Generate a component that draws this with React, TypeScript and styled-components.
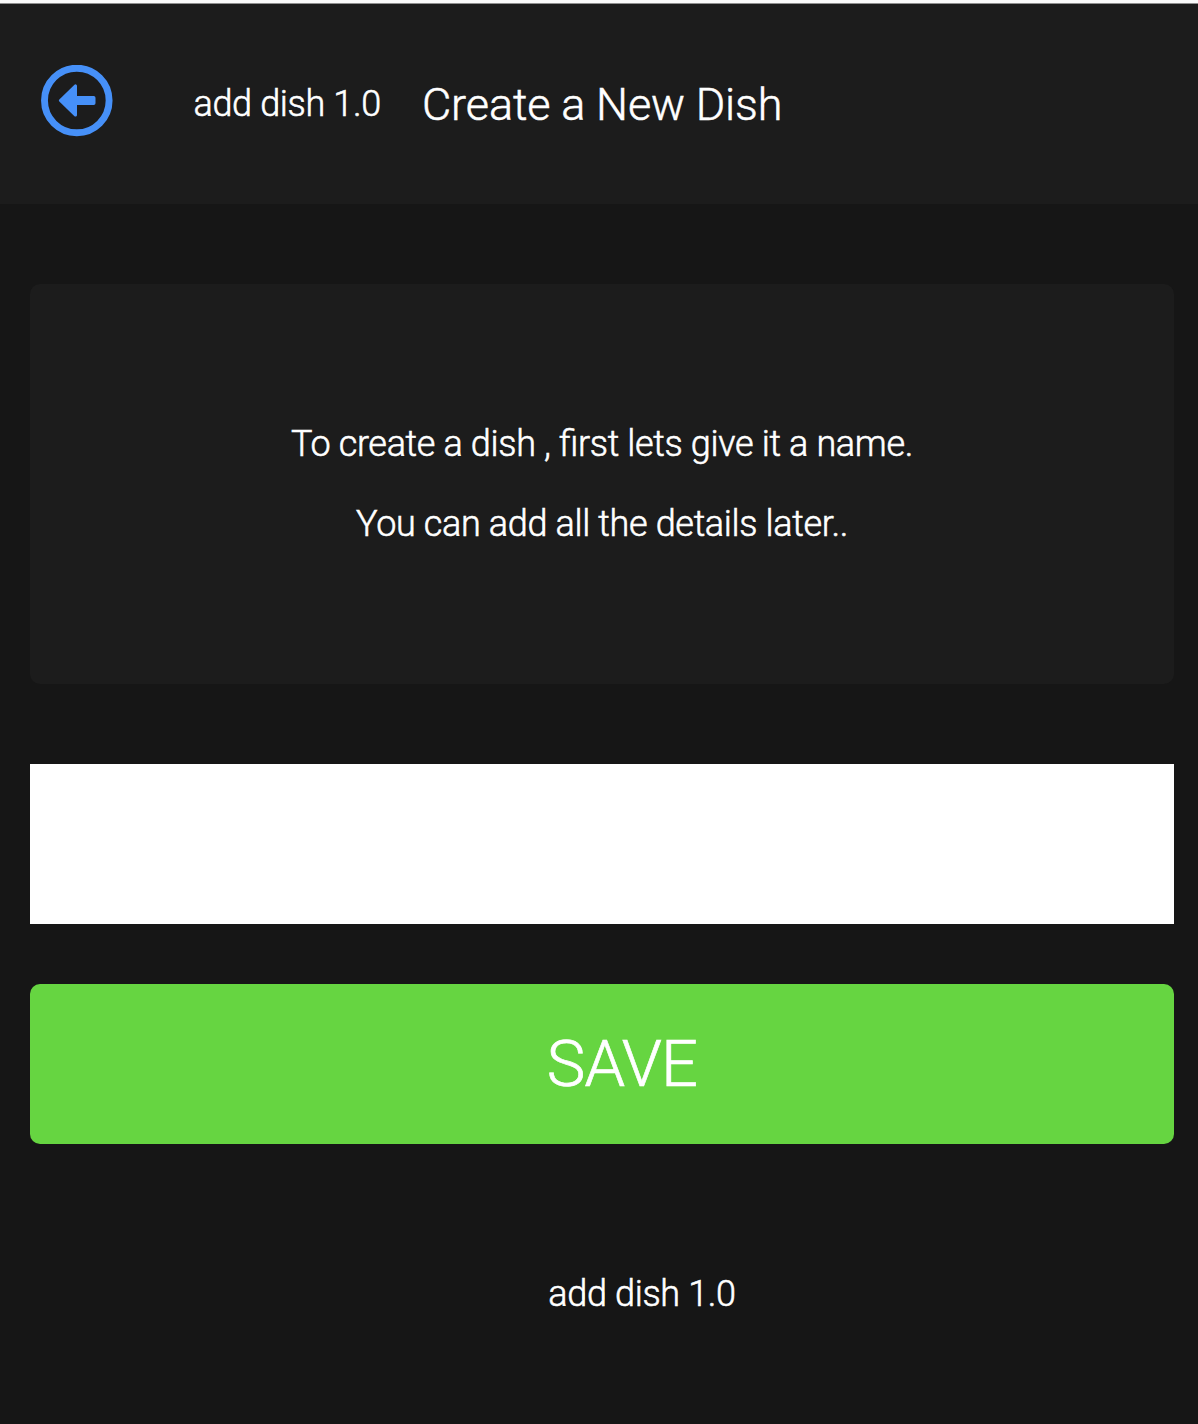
import React from 'react';
import styled, { createGlobalStyle } from 'styled-components';

const GlobalStyle = createGlobalStyle`
  * { box-sizing: border-box; }
  body { margin: 0; background: #161616; }
`;

const Page = styled.div`
  display: flex;
  flex-direction: column;
  height: 1424px;
  background: #161616;
  border-top: 3px solid #fafafa;
  color: #fff;
  font-family: Roboto, sans-serif;
  font-weight: 300;
  overflow: hidden;
`;

const Header = styled.header`
  display: flex;
  align-items: center;
  height: 201px;
  padding-left: 41px;
  border-top: 1px solid #8f8f8f;
  background: #1c1c1c;
`;

const BackButton = styled.button`
  width: 72px;
  height: 72px;
  padding: 0;
  margin: 0 80.5px 7px 0;
  border: 0;
  background: none;
  color: #4690f8;
  svg { display: block; }
`;

const Label = styled.span<{ $width?: number }>`
  font-size: 36px;
  line-height: 80px;
  letter-spacing: -0.35px;
  font-feature-settings: 'liga' 1;
  -webkit-text-stroke: 0.55px currentColor;
  white-space: nowrap;
  width: ${({ $width }) => ($width ? `${$width}px` : 'auto')};
`;

const Title = styled.h1`
  margin: 1px 0 0;
  font-size: 45px;
  font-weight: 300;
  line-height: 80px;
  letter-spacing: -0.12px;
  -webkit-text-stroke: 0.5px currentColor;
  white-space: nowrap;
`;

const Main = styled.main`
  display: flex;
  flex-direction: column;
  padding: 80px 24px 0 30px;
`;

const Card = styled.section`
  display: flex;
  flex-direction: column;
  justify-content: center;
  align-items: center;
  height: 400px;
  border-radius: 10px;
  background: #1c1c1c;
`;

const NameInput = styled.input`
  height: 160px;
  margin: 80px 0 60px;
  padding: 0 30px;
  border: 0;
  border-radius: 0;
  outline: none;
  background: #fff;
  font: 300 36px Roboto, sans-serif;
`;

const SaveButton = styled.button`
  height: 160px;
  padding: 0 0 0 40px;
  border: 0;
  border-radius: 10px;
  background: #66d541;
  color: #fff;
  font: 300 65px/160px Roboto, sans-serif;
  letter-spacing: -0.7px;
  -webkit-text-stroke: 0.7px currentColor;
`;

const Footer = styled.footer`
  display: flex;
  justify-content: center;
  padding: 110px 0 0 80px;
`;

export default function App() {
  return (
    <>
      <GlobalStyle />
      <Page>
        <Header>
          <BackButton aria-label="Back">
            <svg width="72" height="72" viewBox="0 0 72 72" fill="none">
              <circle cx="35.8" cy="35.5" r="32.3" stroke="currentColor" strokeWidth="6.9" />
              <path d="M18.3 34.5 33.2 20Q34 19.2 35 19.4Q36 19.8 36 21V31H52.7Q54.5 31 54.5 32.8V38.2Q54.5 40 52.7 40H36V50Q36 51.2 35 51.5Q34 51.7 33.2 51L18.3 36.5Q17.3 35.5 18.3 34.5Z" fill="currentColor" />
            </svg>
          </BackButton>
          <Label $width={228.5}>add dish 1.0</Label>
          <Title>Create a New Dish</Title>
        </Header>
        <Main>
          <Card>
            <Label>To create a dish , first lets give it a name.</Label>
            <Label>You can add all the details later..</Label>
          </Card>
          <NameInput aria-label="Dish name" />
          <SaveButton>SAVE</SaveButton>
          <Footer>
            <Label>add dish 1.0</Label>
          </Footer>
        </Main>
      </Page>
    </>
  );
}
